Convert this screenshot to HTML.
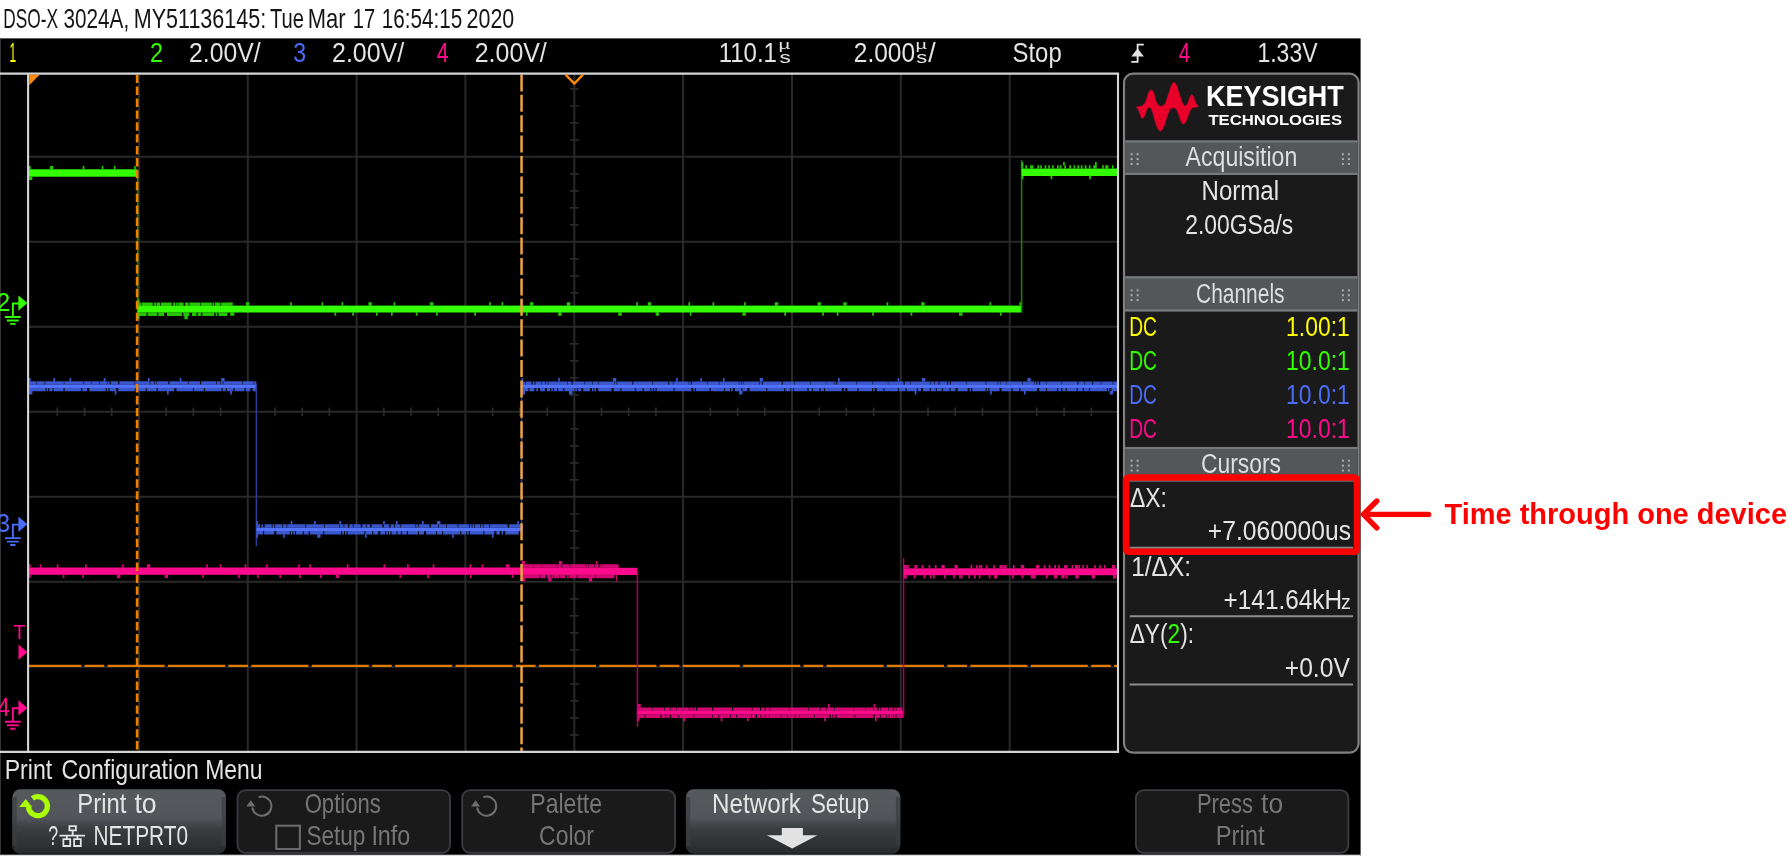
<!DOCTYPE html>
<html lang="en"><head><meta charset="utf-8"><title>DSO-X 3024A screen capture</title>
<style>html,body{margin:0;padding:0;background:#fff;overflow:hidden}body{width:1789px;height:856px}svg text{white-space:pre;filter:url(#nf)}</style>
</head><body>
<svg width="1789" height="856" viewBox="0 0 1789 856" font-family='"Liberation Sans", sans-serif' style="display:block">
<defs>
<filter id="nf" x="-5%" y="-25%" width="110%" height="150%" color-interpolation-filters="sRGB"><feOffset dx="0" dy="0"/></filter>
<linearGradient id="btn" x1="0" y1="0" x2="0" y2="1"><stop offset="0" stop-color="#565a5d"/><stop offset="0.44" stop-color="#52565a"/><stop offset="0.6" stop-color="#3c3f42"/><stop offset="1" stop-color="#27292b"/></linearGradient>
<clipPath id="plotclip"><rect x="29" y="74.8" width="1088.2" height="676"/></clipPath>
</defs>
<rect width="1789" height="856" fill="#fff"/>
<rect x="0" y="38.4" width="1360.6" height="817.6" fill="#000"/>
<rect x="0" y="854.7" width="1360.6" height="1.3" fill="#dcdcdc"/>
<rect x="0" y="38.4" width="0.9" height="816.3" fill="#3a3a3a"/>
<text x="3.35" y="27.7" font-size="28.3" fill="#151515" textLength="54.74" lengthAdjust="spacingAndGlyphs">DSO-X</text>
<text x="63.55" y="27.7" font-size="28.3" fill="#151515" textLength="65.59" lengthAdjust="spacingAndGlyphs">3024A,</text>
<text x="133.72" y="27.7" font-size="28.3" fill="#151515" textLength="132.53" lengthAdjust="spacingAndGlyphs">MY51136145:</text>
<text x="269.98" y="27.7" font-size="28.3" fill="#151515" textLength="34.03" lengthAdjust="spacingAndGlyphs">Tue</text>
<text x="307.78" y="27.7" font-size="28.3" fill="#151515" textLength="37.82" lengthAdjust="spacingAndGlyphs">Mar</text>
<text x="352.84" y="27.7" font-size="28.3" fill="#151515" textLength="22.37" lengthAdjust="spacingAndGlyphs">17</text>
<text x="381.71" y="27.7" font-size="28.3" fill="#151515" textLength="80.43" lengthAdjust="spacingAndGlyphs">16:54:15</text>
<text x="466.60" y="27.7" font-size="28.3" fill="#151515" textLength="47.64" lengthAdjust="spacingAndGlyphs">2020</text>
<text x="9.46" y="62.1" font-size="27.9" fill="#ffff00" textLength="6.63" lengthAdjust="spacingAndGlyphs">1</text>
<text x="149.90" y="62.1" font-size="27.9" fill="#33ff00" textLength="13.05" lengthAdjust="spacingAndGlyphs">2</text>
<text x="189.04" y="62.1" font-size="27.9" fill="#e4e4e4" textLength="71.47" lengthAdjust="spacingAndGlyphs">2.00V/</text>
<text x="293.28" y="62.1" font-size="27.9" fill="#4a6cf7" textLength="12.86" lengthAdjust="spacingAndGlyphs">3</text>
<text x="332.03" y="62.1" font-size="27.9" fill="#e4e4e4" textLength="72.08" lengthAdjust="spacingAndGlyphs">2.00V/</text>
<text x="436.67" y="62.1" font-size="27.9" fill="#ff0a8c" textLength="11.86" lengthAdjust="spacingAndGlyphs">4</text>
<text x="474.73" y="62.1" font-size="27.9" fill="#e4e4e4" textLength="72.08" lengthAdjust="spacingAndGlyphs">2.00V/</text>
<text x="718.70" y="62.1" font-size="27.9" fill="#e4e4e4" textLength="58.27" lengthAdjust="spacingAndGlyphs">110.1</text>
<text x="778.62" y="49.2" font-size="13.5" fill="#e4e4e4" textLength="11.75" lengthAdjust="spacingAndGlyphs">µ</text>
<text x="779.55" y="63.2" font-size="17" fill="#e4e4e4" textLength="11.26" lengthAdjust="spacingAndGlyphs">s</text>
<text x="853.85" y="62.1" font-size="27.9" fill="#e4e4e4" textLength="61.26" lengthAdjust="spacingAndGlyphs">2.000</text>
<text x="915.46" y="49.2" font-size="13.5" fill="#e4e4e4" textLength="11.41" lengthAdjust="spacingAndGlyphs">µ</text>
<text x="916.36" y="63.2" font-size="17" fill="#e4e4e4" textLength="10.92" lengthAdjust="spacingAndGlyphs">s</text>
<text x="928.30" y="62.1" font-size="27.9" fill="#e4e4e4" textLength="7.41" lengthAdjust="spacingAndGlyphs">/</text>
<text x="1012.55" y="62.1" font-size="27.9" fill="#e4e4e4" textLength="49.11" lengthAdjust="spacingAndGlyphs">Stop</text>
<path d="M1131.3 61.8H1137.6V44.6H1143.8" fill="none" stroke="#e4e4e4" stroke-width="1.8"/>
<path d="M1131.3 56.5L1137.6 48.5L1143.9 56.5Z" fill="#e4e4e4"/>
<text x="1178.68" y="62.1" font-size="27.9" fill="#ff0a8c" textLength="11.33" lengthAdjust="spacingAndGlyphs">4</text>
<text x="1257.46" y="62.1" font-size="27.9" fill="#e4e4e4" textLength="60.02" lengthAdjust="spacingAndGlyphs">1.33V</text>
<path d="M138.9 73.6V751.9M247.8 73.6V751.9M356.6 73.6V751.9M465.4 73.6V751.9M683.1 73.6V751.9M792.0 73.6V751.9M900.8 73.6V751.9M1009.7 73.6V751.9M28.1 156.8H1118.0M28.1 241.8H1118.0M28.1 326.8H1118.0M28.1 411.8H1118.0M28.1 496.8H1118.0M28.1 581.8H1118.0M28.1 666.8H1118.0M574.3 73.6V751.9" stroke="#292929" stroke-width="2" fill="none"/>
<path d="M570.0 88.8H578.6M570.0 105.8H578.6M570.0 122.8H578.6M570.0 139.8H578.6M570.0 173.8H578.6M570.0 190.8H578.6M570.0 207.8H578.6M570.0 224.8H578.6M570.0 258.8H578.6M570.0 275.8H578.6M570.0 292.8H578.6M570.0 309.8H578.6M570.0 343.8H578.6M570.0 360.8H578.6M570.0 377.8H578.6M570.0 394.8H578.6M570.0 428.8H578.6M570.0 445.8H578.6M570.0 462.8H578.6M570.0 479.8H578.6M570.0 513.8H578.6M570.0 530.8H578.6M570.0 547.8H578.6M570.0 564.8H578.6M570.0 598.8H578.6M570.0 615.8H578.6M570.0 632.8H578.6M570.0 649.8H578.6M570.0 683.8H578.6M570.0 700.8H578.6M570.0 717.8H578.6M570.0 734.8H578.6M57.3 407.6V416.0M84.5 407.6V416.0M111.7 407.6V416.0M166.1 407.6V416.0M193.4 407.6V416.0M220.6 407.6V416.0M275.0 407.6V416.0M302.2 407.6V416.0M329.4 407.6V416.0M383.8 407.6V416.0M411.0 407.6V416.0M438.2 407.6V416.0M492.7 407.6V416.0M519.9 407.6V416.0M547.1 407.6V416.0M601.5 407.6V416.0M628.7 407.6V416.0M655.9 407.6V416.0M710.3 407.6V416.0M737.6 407.6V416.0M764.8 407.6V416.0M819.2 407.6V416.0M846.4 407.6V416.0M873.6 407.6V416.0M928.0 407.6V416.0M955.2 407.6V416.0M982.5 407.6V416.0M1036.9 407.6V416.0M1064.1 407.6V416.0M1091.3 407.6V416.0" stroke="#292929" stroke-width="1.8" fill="none"/>
<path d="M-36.2 665.8H1117.0" stroke="#e07a00" stroke-width="2.2" stroke-dasharray="57 3.4 57 3.4 19.6 3.4" fill="none" clip-path="url(#plotclip)"/>
<g clip-path="url(#plotclip)">
<rect x="29.0" y="169.3" width="108.3" height="7.4" fill="#33ff00"/>
<path d="M29.0 167.75H30.7M49.9 167.75H53.3M82.7 167.75H84.4M101.7 167.75H103.4M113.8 167.75H115.5M134.1 167.75H135.8" stroke="#25c400" stroke-width="3.50" fill="none"/>
<path d="M29.0 178.25H32.4" stroke="#25c400" stroke-width="3.50" fill="none"/>
<path d="M137.6 170V318" stroke="#188600" stroke-width="1.5"/>
<rect x="137.6" y="305.8" width="93.4" height="6.8" fill="#33ff00"/>
<path d="M137.6 304.25H141.2M141.9 304.25H152.8M154.2 304.25H156.0M156.7 304.25H160.3M161.0 304.25H171.8M173.2 304.25H175.0M175.7 304.25H177.5M178.2 304.25H183.6M185.1 304.25H188.7M189.4 304.25H200.2M200.9 304.25H211.7M212.4 304.25H214.2M214.9 304.25H220.4M221.1 304.25H231.0" stroke="#25c400" stroke-width="3.50" fill="none"/>
<path d="M137.6 314.15H146.5M147.9 314.15H156.9M158.3 314.15H164.2M167.0 314.15H181.9M183.3 314.15H189.2M192.0 314.15H196.5M197.9 314.15H200.9M202.3 314.15H214.2M215.6 314.15H217.1M218.5 314.15H227.4M230.2 314.15H231.0" stroke="#25c400" stroke-width="3.50" fill="none"/>
<path d="M137.6 300.95H139.3" stroke="#25c400" stroke-width="3.50" fill="none"/>
<path d="M137.6 317.45H139.3M184.4 317.45H187.8" stroke="#25c400" stroke-width="3.50" fill="none"/>
<rect x="231.0" y="305.6" width="790.6" height="6.9" fill="#33ff00"/>
<path d="M231.0 304.05H232.7M245.9 304.05H249.3M290.2 304.05H291.9M321.6 304.05H323.3M341.6 304.05H343.3M368.4 304.05H371.8M393.6 304.05H395.3M430.0 304.05H433.4M489.2 304.05H490.9M501.6 304.05H503.3M529.9 304.05H533.3M566.8 304.05H570.2M636.3 304.05H638.0M647.7 304.05H651.1M688.4 304.05H690.1M712.5 304.05H714.2M744.1 304.05H745.8M774.8 304.05H778.2M817.5 304.05H820.9M843.3 304.05H846.7M886.6 304.05H888.3M921.2 304.05H924.6M989.5 304.05H991.2M1019.4 304.05H1021.1" stroke="#25c400" stroke-width="3.50" fill="none"/>
<path d="M231.0 314.05H234.4M334.5 314.05H336.2M352.3 314.05H354.0M375.9 314.05H377.6M391.0 314.05H392.7M415.8 314.05H417.5M436.1 314.05H437.8M474.3 314.05H476.0M525.9 314.05H527.6M558.2 314.05H561.6M618.3 314.05H621.7M655.6 314.05H659.0M689.7 314.05H691.4M742.4 314.05H745.8M784.3 314.05H786.0M822.2 314.05H823.9M836.8 314.05H838.5M872.2 314.05H873.9M910.6 314.05H912.3M959.1 314.05H962.5M999.9 314.05H1001.6" stroke="#25c400" stroke-width="3.50" fill="none"/>
<path d="M1021.6 312V160" stroke="#188600" stroke-width="1.5"/>
<rect x="1021.6" y="168.6" width="95.9" height="7.4" fill="#33ff00"/>
<path d="M1021.6 167.05H1023.3M1025.3 167.05H1027.0M1030.0 167.05H1033.4M1037.4 167.05H1039.1M1040.2 167.05H1041.9M1044.6 167.05H1046.3M1048.3 167.05H1050.0M1052.1 167.05H1053.8M1057.0 167.05H1058.7M1059.9 167.05H1061.6M1064.3 167.05H1066.0M1069.3 167.05H1071.0M1073.6 167.05H1075.3M1077.4 167.05H1079.1M1080.8 167.05H1082.5M1084.7 167.05H1086.4M1088.8 167.05H1090.5M1093.3 167.05H1096.7M1102.1 167.05H1103.8M1105.1 167.05H1108.5M1111.9 167.05H1113.6M1116.9 167.05H1117.5" stroke="#25c400" stroke-width="3.50" fill="none"/>
<path d="M1021.6 163.75H1023.3M1063.1 163.75H1064.8M1095.0 163.75H1096.7" stroke="#25c400" stroke-width="3.50" fill="none"/>
<path d="M1021.6 177.55H1023.3M1050.6 177.55H1052.3M1089.2 177.55H1090.9" stroke="#25c400" stroke-width="3.50" fill="none"/>
<rect x="29.0" y="384.5" width="227.4" height="3.5" fill="#5273ff"/>
<path d="M29.0 382.95H36.5M37.0 382.95H44.5M45.1 382.95H63.8M64.3 382.95H83.0M83.6 382.95H91.1M91.6 382.95H99.1M99.7 382.95H107.2M107.7 382.95H109.6M110.7 382.95H118.2M119.3 382.95H134.3M134.8 382.95H149.8M150.4 382.95H154.1M154.7 382.95H156.5M157.1 382.95H168.3M169.4 382.95H188.1M188.7 382.95H199.9M201.0 382.95H216.0M216.6 382.95H220.3M220.9 382.95H222.7M223.3 382.95H242.0M242.6 382.95H253.8M254.3 382.95H256.4" stroke="#3b57cc" stroke-width="3.50" fill="none"/>
<path d="M29.0 389.55H45.6M46.6 389.55H48.3M49.3 389.55H52.6M53.6 389.55H63.6M64.6 389.55H81.2M82.2 389.55H87.2M89.2 389.55H105.8M106.8 389.55H108.5M109.5 389.55H116.2M118.2 389.55H134.8M135.8 389.55H145.8M146.8 389.55H156.7M157.8 389.55H174.3M176.4 389.55H193.0M194.0 389.55H203.9M205.0 389.55H221.6M222.6 389.55H225.9M226.9 389.55H233.6M234.6 389.55H244.5M245.6 389.55H250.5M252.6 389.55H256.4" stroke="#3b57cc" stroke-width="3.50" fill="none"/>
<path d="M29.0 379.65H30.7M53.3 379.65H55.0M69.5 379.65H71.2M103.8 379.65H105.5M147.9 379.65H149.6M179.7 379.65H181.4M221.2 379.65H224.6" stroke="#3b57cc" stroke-width="3.50" fill="none"/>
<path d="M29.0 392.85H32.4M114.8 392.85H116.5M167.0 392.85H168.7M230.2 392.85H231.9" stroke="#3b57cc" stroke-width="3.50" fill="none"/>
<path d="M256.4 384V546" stroke="#2a3e96" stroke-width="1.5"/>
<rect x="256.4" y="527.6" width="265.2" height="3.5" fill="#5273ff"/>
<path d="M256.4 526.05H260.0M261.4 526.05H263.2M264.6 526.05H271.8M272.5 526.05H274.4M275.1 526.05H282.3M283.0 526.05H286.6M287.3 526.05H305.4M306.1 526.05H324.1M324.8 526.05H339.3M340.0 526.05H343.6M344.3 526.05H347.9M349.3 526.05H352.9M353.6 526.05H360.8M362.2 526.05H365.9M366.6 526.05H370.2M371.6 526.05H382.4M383.8 526.05H389.2M390.6 526.05H394.2M395.0 526.05H400.4M401.1 526.05H415.5M416.2 526.05H418.0M418.7 526.05H429.6M431.0 526.05H438.2M438.9 526.05H446.1M446.8 526.05H457.7M458.4 526.05H469.2M469.9 526.05H471.7M472.4 526.05H474.2M474.9 526.05H480.3M481.0 526.05H482.8M483.5 526.05H489.0M489.7 526.05H507.7M509.1 526.05H521.6" stroke="#3b57cc" stroke-width="3.50" fill="none"/>
<path d="M256.4 532.65H263.2M264.1 532.65H274.3M276.2 532.65H289.8M290.7 532.65H292.4M293.4 532.65H295.1M296.0 532.65H302.8M303.7 532.65H308.8M309.8 532.65H323.4M324.3 532.65H341.3M342.3 532.65H344.0M344.9 532.65H346.6M347.5 532.65H364.5M365.5 532.65H372.3M373.2 532.65H378.3M380.2 532.65H385.3M386.2 532.65H387.9M388.8 532.65H390.5M391.5 532.65H396.6M397.5 532.65H400.9M401.8 532.65H406.9M407.9 532.65H418.1M419.0 532.65H424.1M426.0 532.65H436.2M437.1 532.65H442.2M443.1 532.65H460.1M461.1 532.65H466.2M467.1 532.65H468.8M469.8 532.65H483.4M484.3 532.65H494.5M496.4 532.65H499.8M501.6 532.65H503.3M505.2 532.65H518.8M520.7 532.65H521.6" stroke="#3b57cc" stroke-width="3.50" fill="none"/>
<path d="M256.4 522.75H258.1M290.7 522.75H292.4M314.0 522.75H315.7M339.3 522.75H341.0M383.1 522.75H384.8M395.9 522.75H397.6M422.0 522.75H423.7M437.0 522.75H440.4M517.4 522.75H519.1" stroke="#3b57cc" stroke-width="3.50" fill="none"/>
<path d="M256.4 535.95H258.1M283.1 535.95H284.8M317.1 535.95H320.5M365.0 535.95H366.7M452.1 535.95H453.8M491.9 535.95H493.6" stroke="#3b57cc" stroke-width="3.50" fill="none"/>
<path d="M521.6 532V380" stroke="#2a3e96" stroke-width="1.5"/>
<rect x="521.6" y="384.7" width="595.9" height="3.3" fill="#5273ff"/>
<path d="M521.6 383.15H525.4M525.9 383.15H531.6M532.6 383.15H534.5M535.4 383.15H541.1M541.6 383.15H545.4M545.9 383.15H547.8M548.3 383.15H567.4M567.9 383.15H571.7M572.6 383.15H584.1M584.6 383.15H592.2M592.7 383.15H598.4M598.9 383.15H614.2M614.7 383.15H616.6M617.1 383.15H632.4M633.3 383.15H652.4M652.9 383.15H668.2M669.1 383.15H672.9M673.4 383.15H688.7M689.2 383.15H691.1M692.0 383.15H707.3M707.8 383.15H719.3M719.7 383.15H738.9M739.3 383.15H741.2M741.7 383.15H743.6M744.1 383.15H759.4M759.9 383.15H761.8M762.7 383.15H781.8M782.8 383.15H794.2M794.7 383.15H810.0M810.5 383.15H825.8M826.2 383.15H833.9M834.4 383.15H836.3M837.2 383.15H856.3M856.8 383.15H872.1M872.6 383.15H887.9M888.3 383.15H903.6M904.6 383.15H910.3M910.8 383.15H929.9M930.4 383.15H934.2M934.7 383.15H938.5M939.4 383.15H947.1M948.0 383.15H949.9M950.8 383.15H966.1M966.6 383.15H985.7M986.2 383.15H997.7M998.2 383.15H1000.1M1000.5 383.15H1006.3M1006.7 383.15H1022.0M1022.5 383.15H1034.0M1034.4 383.15H1036.4M1037.3 383.15H1039.2M1040.1 383.15H1045.9M1046.3 383.15H1061.6M1062.1 383.15H1077.4M1078.3 383.15H1084.1M1084.6 383.15H1092.2M1093.1 383.15H1100.8M1101.3 383.15H1112.7M1113.2 383.15H1117.5" stroke="#3b57cc" stroke-width="3.50" fill="none"/>
<path d="M521.6 389.55H528.4M529.3 389.55H534.4M536.3 389.55H538.0M539.9 389.55H545.0M546.8 389.55H550.2M551.2 389.55H552.9M553.8 389.55H557.2M558.1 389.55H563.2M564.2 389.55H574.4M575.3 389.55H577.0M578.0 389.55H581.4M583.2 389.55H590.0M591.9 389.55H593.6M594.5 389.55H596.2M598.1 389.55H611.7M613.6 389.55H620.4M621.3 389.55H634.9M635.8 389.55H642.6M643.6 389.55H650.4M651.3 389.55H653.0M653.9 389.55H655.6M656.6 389.55H673.6M674.5 389.55H691.5M693.4 389.55H695.1M696.0 389.55H709.6M710.6 389.55H724.2M725.1 389.55H730.2M731.1 389.55H732.8M734.7 389.55H741.5M742.4 389.55H747.5M749.4 389.55H766.4M767.3 389.55H784.3M785.3 389.55H790.4M791.3 389.55H793.0M793.9 389.55H807.5M808.5 389.55H811.9M812.8 389.55H819.6M820.5 389.55H823.9M824.9 389.55H841.9M843.7 389.55H845.4M847.3 389.55H857.5M858.5 389.55H872.1M873.0 389.55H874.7M876.6 389.55H883.4M884.3 389.55H897.9M898.8 389.55H905.6M906.6 389.55H916.8M917.7 389.55H921.1M923.0 389.55H929.8M930.7 389.55H935.8M936.7 389.55H941.8M942.8 389.55H949.6M950.5 389.55H955.6M957.5 389.55H967.7M969.5 389.55H971.2M972.2 389.55H985.8M986.7 389.55H988.4M989.4 389.55H999.6M1001.4 389.55H1011.6M1012.6 389.55H1019.4M1020.3 389.55H1037.3M1039.2 389.55H1046.0M1046.9 389.55H1057.1M1058.0 389.55H1061.4M1062.4 389.55H1065.8M1066.7 389.55H1076.9M1077.8 389.55H1082.9M1083.9 389.55H1089.0M1089.9 389.55H1106.9M1107.8 389.55H1109.5M1111.4 389.55H1117.5" stroke="#3b57cc" stroke-width="3.50" fill="none"/>
<path d="M521.6 379.85H523.3M558.1 379.85H559.8M612.9 379.85H616.3M676.1 379.85H677.8M700.3 379.85H702.0M722.9 379.85H724.6M759.7 379.85H763.1M838.0 379.85H839.7M897.6 379.85H899.3M921.9 379.85H925.3M1027.4 379.85H1030.8" stroke="#3b57cc" stroke-width="3.50" fill="none"/>
<path d="M521.6 392.85H525.0M569.0 392.85H572.4M739.1 392.85H742.5M914.7 392.85H916.4M990.1 392.85H991.8M1023.9 392.85H1025.6M1109.7 392.85H1113.1" stroke="#3b57cc" stroke-width="3.50" fill="none"/>
<rect x="29.0" y="567.5" width="492.6" height="7.3" fill="#ff0a8c"/>
<path d="M29.0 565.95H30.7M39.8 565.95H41.5M56.8 565.95H58.5M85.0 565.95H86.7M121.9 565.95H123.6M146.9 565.95H150.3M206.2 565.95H207.9M219.7 565.95H221.4M244.6 565.95H246.3M265.9 565.95H267.6M298.0 565.95H299.7M309.1 565.95H310.8M346.8 565.95H348.5M383.5 565.95H385.2M407.1 565.95H408.8M432.7 565.95H434.4M469.5 565.95H471.2M481.7 565.95H483.4M505.9 565.95H509.3" stroke="#d40874" stroke-width="3.50" fill="none"/>
<path d="M29.0 576.35H30.7M62.7 576.35H64.4M82.3 576.35H84.0M116.9 576.35H120.3M164.7 576.35H168.1M202.1 576.35H203.8M238.1 576.35H239.8M257.0 576.35H258.7M279.3 576.35H281.0M299.0 576.35H300.7M319.9 576.35H321.6M335.7 576.35H339.1M399.4 576.35H401.1M427.3 576.35H429.0M469.9 576.35H471.6M511.8 576.35H513.5" stroke="#d40874" stroke-width="3.50" fill="none"/>
<rect x="521.6" y="567.5" width="95.4" height="7.4" fill="#ff0a8c"/>
<path d="M521.6 565.95H533.1M533.5 565.95H541.2M541.7 565.95H557.0M557.4 565.95H561.3M562.2 565.95H569.8M570.3 565.95H585.6M586.1 565.95H588.0M588.5 565.95H594.2M594.7 565.95H598.5M599.4 565.95H601.3M601.8 565.95H617.0" stroke="#d40874" stroke-width="3.50" fill="none"/>
<path d="M521.6 576.45H539.7M540.4 576.45H545.8M547.2 576.45H550.8M551.5 576.45H553.3M554.0 576.45H559.4M560.1 576.45H565.5M566.9 576.45H568.8M569.5 576.45H576.7M577.4 576.45H595.4M596.1 576.45H614.2M615.6 576.45H617.0" stroke="#d40874" stroke-width="3.50" fill="none"/>
<path d="M521.6 562.65H525.0M558.8 562.65H562.2M595.9 562.65H597.6" stroke="#d40874" stroke-width="3.50" fill="none"/>
<path d="M521.6 579.75H525.0M548.2 579.75H551.6M588.8 579.75H592.2M616.1 579.75H617.0" stroke="#d40874" stroke-width="3.50" fill="none"/>
<rect x="617.0" y="567.8" width="20.4" height="7.2" fill="#ff0a8c"/>
<path d="M617.0 566.25H618.7" stroke="#d40874" stroke-width="3.50" fill="none"/>
<path d="M637.4 570V727" stroke="#a0065a" stroke-width="1.5"/>
<rect x="637.4" y="710.7" width="266.2" height="3.9" fill="#ff0a8c"/>
<path d="M637.4 709.15H652.4M652.9 709.15H664.1M664.7 709.15H670.3M670.9 709.15H676.5M677.0 709.15H682.7M683.2 709.15H688.8M689.4 709.15H691.3M691.8 709.15H693.7M694.2 709.15H696.1M697.2 709.15H712.2M713.3 709.15H732.0M733.1 709.15H751.8M752.4 709.15H759.9M761.0 709.15H764.7M765.9 709.15H769.6M770.2 709.15H788.9M789.4 709.15H808.1M808.7 709.15H819.9M820.5 709.15H826.1M826.6 709.15H834.1M834.7 709.15H853.4M853.9 709.15H865.2M865.7 709.15H873.2M873.8 709.15H877.5M878.6 709.15H880.5M881.1 709.15H888.5M889.1 709.15H892.8M894.0 709.15H895.8M896.4 709.15H902.0M902.6 709.15H903.6" stroke="#d40874" stroke-width="3.50" fill="none"/>
<path d="M637.4 716.15H644.6M646.0 716.15H660.5M661.9 716.15H665.5M666.2 716.15H669.8M671.2 716.15H678.4M679.1 716.15H693.6M694.3 716.15H712.3M713.0 716.15H718.5M719.2 716.15H730.0M730.7 716.15H736.1M736.8 716.15H751.3M752.0 716.15H755.6M757.0 716.15H760.6M761.3 716.15H764.9M765.6 716.15H769.2M769.9 716.15H780.8M781.5 716.15H786.9M787.6 716.15H794.8M795.5 716.15H799.1M799.8 716.15H814.3M815.0 716.15H829.4M830.8 716.15H832.6M833.3 716.15H835.2M836.6 716.15H854.6M855.3 716.15H873.4M874.8 716.15H880.2M880.9 716.15H886.3M887.0 716.15H888.8M889.5 716.15H893.1M893.8 716.15H895.7M896.4 716.15H903.6" stroke="#d40874" stroke-width="3.50" fill="none"/>
<path d="M637.4 705.85H640.8M828.0 705.85H829.7M873.6 705.85H875.3" stroke="#d40874" stroke-width="3.50" fill="none"/>
<path d="M637.4 719.45H639.1M683.5 719.45H685.2M720.7 719.45H722.4M746.9 719.45H748.6M824.3 719.45H826.0M875.0 719.45H876.7" stroke="#d40874" stroke-width="3.50" fill="none"/>
<path d="M903.6 716V558" stroke="#a0065a" stroke-width="1.5"/>
<rect x="903.6" y="568.3" width="213.9" height="6.9" fill="#ff0a8c"/>
<path d="M903.6 566.75H905.3M907.3 566.75H909.0M914.3 566.75H917.7M921.5 566.75H923.2M928.6 566.75H930.3M934.9 566.75H936.6M941.3 566.75H944.7M954.5 566.75H957.9M970.5 566.75H972.2M975.8 566.75H977.5M980.5 566.75H982.2M985.8 566.75H987.5M993.2 566.75H994.9M999.5 566.75H1002.9M1013.0 566.75H1014.7M1020.8 566.75H1024.2M1036.0 566.75H1039.4M1043.6 566.75H1045.3M1048.8 566.75H1050.5M1054.3 566.75H1056.0M1058.2 566.75H1059.9M1064.1 566.75H1067.5M1071.6 566.75H1073.3M1078.4 566.75H1080.1M1082.3 566.75H1084.0M1086.4 566.75H1088.1M1094.1 566.75H1095.8M1099.2 566.75H1100.9M1103.9 566.75H1105.6M1111.9 566.75H1115.3" stroke="#d40874" stroke-width="3.50" fill="none"/>
<path d="M903.6 576.75H907.0M913.8 576.75H915.5M923.5 576.75H925.2M933.0 576.75H934.7M944.2 576.75H945.9M953.2 576.75H954.9M960.9 576.75H962.6M968.4 576.75H970.1M974.1 576.75H975.8M978.8 576.75H980.5M988.7 576.75H990.4M994.1 576.75H997.5M1011.9 576.75H1013.6M1021.6 576.75H1023.3M1030.8 576.75H1034.2M1046.0 576.75H1047.7M1054.0 576.75H1057.4M1065.8 576.75H1067.5M1075.3 576.75H1078.7M1091.7 576.75H1095.1M1113.0 576.75H1116.4" stroke="#d40874" stroke-width="3.50" fill="none"/>
<path d="M903.6 566.75H907.0M978.8 566.75H980.5M1003.2 566.75H1006.6M1075.0 566.75H1078.4" stroke="#d40874" stroke-width="3.50" fill="none"/>
<path d="M903.6 576.75H905.3M930.0 576.75H931.7M959.1 576.75H960.8M1034.1 576.75H1035.8M1061.3 576.75H1064.7" stroke="#d40874" stroke-width="3.50" fill="none"/>
</g>
<path d="M137.1 74.7V750.9" stroke="#f08000" stroke-width="2.6" stroke-dasharray="8.4 3.5" fill="none"/>
<path d="M521.55 74.4V750.9" stroke="#f0a242" stroke-width="2.5" stroke-dasharray="17 3.4" fill="none"/>
<path d="M0 73.6H1119.1M0 751.9H1119.1" stroke="#d4d4d4" stroke-width="2.4" fill="none"/>
<path d="M28.1 73.6V751.9M1118.0 73.6V751.9" stroke="#d4d4d4" stroke-width="2.1" fill="none"/>
<path d="M29.2 74.8H39.6L29.2 85.2Z" fill="#ff8c00"/>
<path d="M565.6 74.6L574.3 83.6L583 74.6" stroke="#ff8c00" stroke-width="2.4" fill="none"/>
<text x="-3.56" y="311.0" font-size="25" fill="#33ff00" textLength="13.76" lengthAdjust="spacingAndGlyphs">2</text>
<path d="M18.4 295.4L27.4 303.1L18.4 310.8Z" fill="#33ff00"/>
<path d="M19 303.5H12.9V316.7M4.9 317.0H20.7M6.9 320.5H18.7M10.2 323.9H15.4" stroke="#33ff00" stroke-width="1.9" fill="none"/>
<text x="-3.15" y="532.1" font-size="25" fill="#4a6cf7" textLength="13.32" lengthAdjust="spacingAndGlyphs">3</text>
<path d="M18.4 516.5L27.4 524.2L18.4 531.9Z" fill="#4a6cf7"/>
<path d="M19 524.6H12.9V537.8M4.9 538.1H20.7M6.9 541.6H18.7M10.2 545.0H15.4" stroke="#4a6cf7" stroke-width="1.9" fill="none"/>
<text x="-2.75" y="715.8" font-size="25" fill="#ff0a8c" textLength="12.51" lengthAdjust="spacingAndGlyphs">4</text>
<path d="M18.4 700.2L27.4 707.9L18.4 715.6Z" fill="#ff0a8c"/>
<path d="M19 708.3H12.9V721.5M4.9 721.8H20.7M6.9 725.3H18.7M10.2 728.7H15.4" stroke="#ff0a8c" stroke-width="1.9" fill="none"/>
<text x="13.39" y="638.9" font-size="19.7" fill="#ff0a8c" textLength="11.94" lengthAdjust="spacingAndGlyphs">T</text>
<path d="M18.5 644.6L27.4 652.2L18.5 659.8Z" fill="#ff0a8c"/>
<rect x="1124" y="73.6" width="1234" height="0" fill="none"/>
<rect x="1124" y="73.6" width="234.5999999999999" height="679.0" rx="9" ry="9" fill="#1a1a1a" stroke="#808080" stroke-width="2.2"/>
<rect x="1125.1" y="140.4" width="232.4000000000001" height="34.599999999999994" fill="#53575a"/>
<path d="M1125.1 141.5H1357.5M1125.1 173.9H1357.5" stroke="#76797b" stroke-width="2.2"/>
<text x="1185.60" y="166.2" font-size="28.4" fill="#dedede" textLength="111.70" lengthAdjust="spacingAndGlyphs">Acquisition</text>
<rect x="1130.6" y="153.2" width="2" height="2" fill="#a9acae"/><rect x="1130.6" y="158.1" width="2" height="2" fill="#a9acae"/><rect x="1130.6" y="163.0" width="2" height="2" fill="#a9acae"/><rect x="1136.6" y="153.2" width="2" height="2" fill="#a9acae"/><rect x="1136.6" y="158.1" width="2" height="2" fill="#a9acae"/><rect x="1136.6" y="163.0" width="2" height="2" fill="#a9acae"/><rect x="1341.9" y="153.2" width="2" height="2" fill="#a9acae"/><rect x="1341.9" y="158.1" width="2" height="2" fill="#a9acae"/><rect x="1341.9" y="163.0" width="2" height="2" fill="#a9acae"/><rect x="1347.9" y="153.2" width="2" height="2" fill="#a9acae"/><rect x="1347.9" y="158.1" width="2" height="2" fill="#a9acae"/><rect x="1347.9" y="163.0" width="2" height="2" fill="#a9acae"/>
<rect x="1125.1" y="276.3" width="232.4000000000001" height="35.099999999999966" fill="#53575a"/>
<path d="M1125.1 277.40000000000003H1357.5M1125.1 310.29999999999995H1357.5" stroke="#76797b" stroke-width="2.2"/>
<text x="1196.02" y="302.5" font-size="28.4" fill="#dedede" textLength="88.54" lengthAdjust="spacingAndGlyphs">Channels</text>
<rect x="1130.6" y="289.4" width="2" height="2" fill="#a9acae"/><rect x="1130.6" y="294.2" width="2" height="2" fill="#a9acae"/><rect x="1130.6" y="299.1" width="2" height="2" fill="#a9acae"/><rect x="1136.6" y="289.4" width="2" height="2" fill="#a9acae"/><rect x="1136.6" y="294.2" width="2" height="2" fill="#a9acae"/><rect x="1136.6" y="299.1" width="2" height="2" fill="#a9acae"/><rect x="1341.9" y="289.4" width="2" height="2" fill="#a9acae"/><rect x="1341.9" y="294.2" width="2" height="2" fill="#a9acae"/><rect x="1341.9" y="299.1" width="2" height="2" fill="#a9acae"/><rect x="1347.9" y="289.4" width="2" height="2" fill="#a9acae"/><rect x="1347.9" y="294.2" width="2" height="2" fill="#a9acae"/><rect x="1347.9" y="299.1" width="2" height="2" fill="#a9acae"/>
<rect x="1125.1" y="446.9" width="232.4000000000001" height="34.60000000000002" fill="#53575a"/>
<path d="M1125.1 448.0H1357.5M1125.1 480.4H1357.5" stroke="#76797b" stroke-width="2.2"/>
<text x="1200.93" y="472.6" font-size="28.4" fill="#dedede" textLength="80.09" lengthAdjust="spacingAndGlyphs">Cursors</text>
<rect x="1130.6" y="459.7" width="2" height="2" fill="#a9acae"/><rect x="1130.6" y="464.6" width="2" height="2" fill="#a9acae"/><rect x="1130.6" y="469.5" width="2" height="2" fill="#a9acae"/><rect x="1136.6" y="459.7" width="2" height="2" fill="#a9acae"/><rect x="1136.6" y="464.6" width="2" height="2" fill="#a9acae"/><rect x="1136.6" y="469.5" width="2" height="2" fill="#a9acae"/><rect x="1341.9" y="459.7" width="2" height="2" fill="#a9acae"/><rect x="1341.9" y="464.6" width="2" height="2" fill="#a9acae"/><rect x="1341.9" y="469.5" width="2" height="2" fill="#a9acae"/><rect x="1347.9" y="459.7" width="2" height="2" fill="#a9acae"/><rect x="1347.9" y="464.6" width="2" height="2" fill="#a9acae"/><rect x="1347.9" y="469.5" width="2" height="2" fill="#a9acae"/>
<path d="M1136.4 106.9L1142.0 106.2L1145.5 102.6L1148.3 93.5L1149.7 90.7L1151.1 89.9L1152.5 90.7L1153.9 93.5L1156.1 101.9L1158.9 105.8L1161.7 106.5L1165.2 104.1L1168.7 93.5L1171.5 85.1L1172.9 83.0L1173.9 82.5L1175.0 83.0L1176.4 85.1L1179.2 93.5L1182.0 102.6L1184.8 106.2L1187.6 104.1L1189.7 97.7L1190.8 95.5L1191.8 94.8L1192.9 95.5L1193.9 97.7L1195.3 102.6L1198.1 106.2L1198.1 107.0L1193.2 107.2L1190.4 109.7L1187.6 117.4L1185.5 122.3L1184.5 123.5L1183.4 124.0L1182.3 123.5L1181.3 122.3L1178.5 113.9L1176.4 109.0L1173.6 107.6L1170.1 109.0L1167.3 115.3L1164.5 125.1L1162.4 129.3L1161.3 130.6L1160.3 131.0L1159.2 130.6L1158.2 129.3L1155.7 123.7L1153.2 113.9L1151.1 108.3L1149.4 106.9L1146.9 109.0L1144.8 115.3L1143.4 117.9L1142.4 118.6L1141.3 117.7L1140.6 116.0L1138.5 109.7L1136.4 107.0Z" fill="#e8002b" stroke="#e8002b" stroke-width="0.5" stroke-linejoin="round"/>
<text x="1205.91" y="106.3" font-size="28.6" fill="#fff" textLength="137.93" lengthAdjust="spacingAndGlyphs" font-weight="bold">KEYSIGHT</text>
<text x="1208.40" y="124.9" font-size="15.5" fill="#fff" textLength="133.64" lengthAdjust="spacingAndGlyphs" font-weight="bold">TECHNOLOGIES</text>
<text x="1201.52" y="200.2" font-size="28.4" fill="#e4e4e4" textLength="77.57" lengthAdjust="spacingAndGlyphs">Normal</text>
<text x="1185.23" y="234.4" font-size="28.4" fill="#e4e4e4" textLength="107.99" lengthAdjust="spacingAndGlyphs">2.00GSa/s</text>
<text x="1129.20" y="336.3" font-size="28.4" fill="#ffff00" textLength="27.77" lengthAdjust="spacingAndGlyphs">DC</text>
<text x="1286.07" y="336.3" font-size="28.4" fill="#ffff00" textLength="63.66" lengthAdjust="spacingAndGlyphs">1.00:1</text>
<text x="1129.20" y="370.25" font-size="28.4" fill="#33ff00" textLength="27.77" lengthAdjust="spacingAndGlyphs">DC</text>
<text x="1286.07" y="370.25" font-size="28.4" fill="#33ff00" textLength="63.66" lengthAdjust="spacingAndGlyphs">10.0:1</text>
<text x="1129.20" y="404.20000000000005" font-size="28.4" fill="#4a6cf7" textLength="27.77" lengthAdjust="spacingAndGlyphs">DC</text>
<text x="1286.07" y="404.20000000000005" font-size="28.4" fill="#4a6cf7" textLength="63.66" lengthAdjust="spacingAndGlyphs">10.0:1</text>
<text x="1129.20" y="438.15000000000003" font-size="28.4" fill="#ff0a8c" textLength="27.77" lengthAdjust="spacingAndGlyphs">DC</text>
<text x="1286.07" y="438.15000000000003" font-size="28.4" fill="#ff0a8c" textLength="63.66" lengthAdjust="spacingAndGlyphs">10.0:1</text>
<text x="1130.04" y="506.6" font-size="28.4" fill="#e4e4e4" textLength="36.93" lengthAdjust="spacingAndGlyphs">ΔX:</text>
<text x="1207.85" y="540.1" font-size="28.4" fill="#e4e4e4" textLength="143.12" lengthAdjust="spacingAndGlyphs">+7.060000us</text>
<path d="M1129.7 547.7H1353M1129.7 616.3H1353M1129.7 684.5H1353" stroke="#8e8e8e" stroke-width="2"/>
<text x="1131.27" y="575.5" font-size="28.4" fill="#e4e4e4" textLength="59.73" lengthAdjust="spacingAndGlyphs">1/ΔX:</text>
<text x="1223.56" y="608.5" font-size="28.4" fill="#e4e4e4" textLength="118.63" lengthAdjust="spacingAndGlyphs">+141.64kH</text>
<text x="1340.99" y="608.5" font-size="21" fill="#e4e4e4" textLength="9.84" lengthAdjust="spacingAndGlyphs">z</text>
<text x="1129.65" y="642.7" font-size="28.4" fill="#e4e4e4" textLength="64.41" lengthAdjust="spacingAndGlyphs">ΔY(<tspan fill="#33ff00">2</tspan>):</text>
<text x="1284.85" y="677.1" font-size="28.4" fill="#e4e4e4" textLength="64.93" lengthAdjust="spacingAndGlyphs">+0.0V</text>
<rect x="1126.05" y="477.55" width="230.9" height="74.2" rx="2.5" ry="2.5" fill="none" stroke="#ff0000" stroke-width="6.5"/>
<path d="M1428.6 514.4H1364M1376.8 501L1363.4 514.4L1376.8 527.8" fill="none" stroke="#ff0000" stroke-width="5.4" stroke-linecap="round" stroke-linejoin="round"/>
<text x="1444.50" y="523.7" font-size="29.5" fill="#ff0000" textLength="342.52" lengthAdjust="spacingAndGlyphs" font-weight="bold">Time through one device</text>
<text x="4.69" y="778.7" font-size="28" fill="#e4e4e4" textLength="47.53" lengthAdjust="spacingAndGlyphs">Print</text>
<text x="61.42" y="778.7" font-size="28" fill="#e4e4e4" textLength="137.48" lengthAdjust="spacingAndGlyphs">Configuration</text>
<text x="205.31" y="778.7" font-size="28" fill="#e4e4e4" textLength="57.27" lengthAdjust="spacingAndGlyphs">Menu</text>
<rect x="12.3" y="789.2" width="213.7" height="64.6" rx="8" ry="8" fill="url(#btn)"/>
<path d="M14.5 797V846" stroke="#3a3d40" stroke-width="4.4" opacity="0.7"/>
<path d="M223.8 797V846" stroke="#3a3d40" stroke-width="4.4" opacity="0.7"/>
<path d="M32.4 798.4A9.5 9.5 0 1 1 28.4 806.2" fill="none" stroke="#aaff00" stroke-width="5.2"/>
<path d="M19.2 807.1L25.7 798.9L32.2 807.1Z" fill="#aaff00"/>
<text x="77.34" y="812.7" font-size="28" fill="#e4e4e4" textLength="48.98" lengthAdjust="spacingAndGlyphs">Print</text>
<text x="134.40" y="812.7" font-size="28" fill="#e4e4e4" textLength="22.18" lengthAdjust="spacingAndGlyphs">to</text>
<text x="48.34" y="845.2" font-size="28" fill="#e4e4e4" textLength="9.90" lengthAdjust="spacingAndGlyphs">?</text>
<path d="M69.4 826.1H75.9V830.4H69.4ZM72.65 830.4V835.6M59.5 835.6H85M66.8 835.6V838.6M77.4 835.6V838.6M63.4 839.1H70.2V846H63.4ZM74.1 839.1H80.8V846H74.1Z" fill="none" stroke="#e4e4e4" stroke-width="1.8"/>
<text x="93.57" y="845.2" font-size="28" fill="#e4e4e4" textLength="94.44" lengthAdjust="spacingAndGlyphs">NETPRT0</text>
<rect x="237.5" y="790.1" width="212.6" height="62.8" rx="8" ry="8" fill="#1a1a1a" stroke="#3b3d40" stroke-width="1.8"/>
<path d="M258.6 797.1A9.6 9.6 0 1 1 252.3 807.5" fill="none" stroke="#6e6e6e" stroke-width="2.0"/>
<path d="M246.3 806.4L250.8 800.2L255.3 806.4Z" fill="#6e6e6e"/>
<text x="304.66" y="813.0" font-size="28" fill="#767676" textLength="76.23" lengthAdjust="spacingAndGlyphs">Options</text>
<rect x="276.3" y="825.7" width="23.6" height="23.3" fill="none" stroke="#6a6a6a" stroke-width="2.1"/>
<text x="306.39" y="845.1" font-size="28" fill="#767676" textLength="59.02" lengthAdjust="spacingAndGlyphs">Setup</text>
<text x="371.38" y="845.1" font-size="28" fill="#767676" textLength="38.86" lengthAdjust="spacingAndGlyphs">Info</text>
<rect x="462.2" y="790.1" width="212.89999999999998" height="62.8" rx="8" ry="8" fill="#1a1a1a" stroke="#3b3d40" stroke-width="1.8"/>
<path d="M483.4 797.1A9.6 9.6 0 1 1 477.1 807.5" fill="none" stroke="#6e6e6e" stroke-width="2.0"/>
<path d="M471.1 806.4L475.6 800.2L480.1 806.4Z" fill="#6e6e6e"/>
<text x="530.30" y="812.8" font-size="28" fill="#767676" textLength="71.73" lengthAdjust="spacingAndGlyphs">Palette</text>
<text x="539.02" y="844.8" font-size="28" fill="#767676" textLength="54.99" lengthAdjust="spacingAndGlyphs">Color</text>
<rect x="685.9" y="789.2" width="214.4" height="64.6" rx="8" ry="8" fill="url(#btn)"/>
<path d="M688.1 797V846" stroke="#3a3d40" stroke-width="4.4" opacity="0.7"/>
<path d="M898.0999999999999 797V846" stroke="#3a3d40" stroke-width="4.4" opacity="0.7"/>
<text x="712.11" y="812.7" font-size="28" fill="#e4e4e4" textLength="88.71" lengthAdjust="spacingAndGlyphs">Network</text>
<text x="810.90" y="812.7" font-size="28" fill="#e4e4e4" textLength="58.30" lengthAdjust="spacingAndGlyphs">Setup</text>
<path d="M781.8 828H802.9V835.2H817.4L792.2 848.4L766.8 835.2H781.8Z" fill="#e2e2e2"/>
<rect x="1135.9" y="790.1" width="212.5" height="62.8" rx="8" ry="8" fill="#1a1a1a" stroke="#3b3d40" stroke-width="1.8"/>
<text x="1196.89" y="812.7" font-size="28" fill="#767676" textLength="56.10" lengthAdjust="spacingAndGlyphs">Press</text>
<text x="1261.10" y="812.7" font-size="28" fill="#767676" textLength="22.07" lengthAdjust="spacingAndGlyphs">to</text>
<text x="1215.64" y="845.0" font-size="28" fill="#767676" textLength="48.98" lengthAdjust="spacingAndGlyphs">Print</text>
</svg>
</body></html>
